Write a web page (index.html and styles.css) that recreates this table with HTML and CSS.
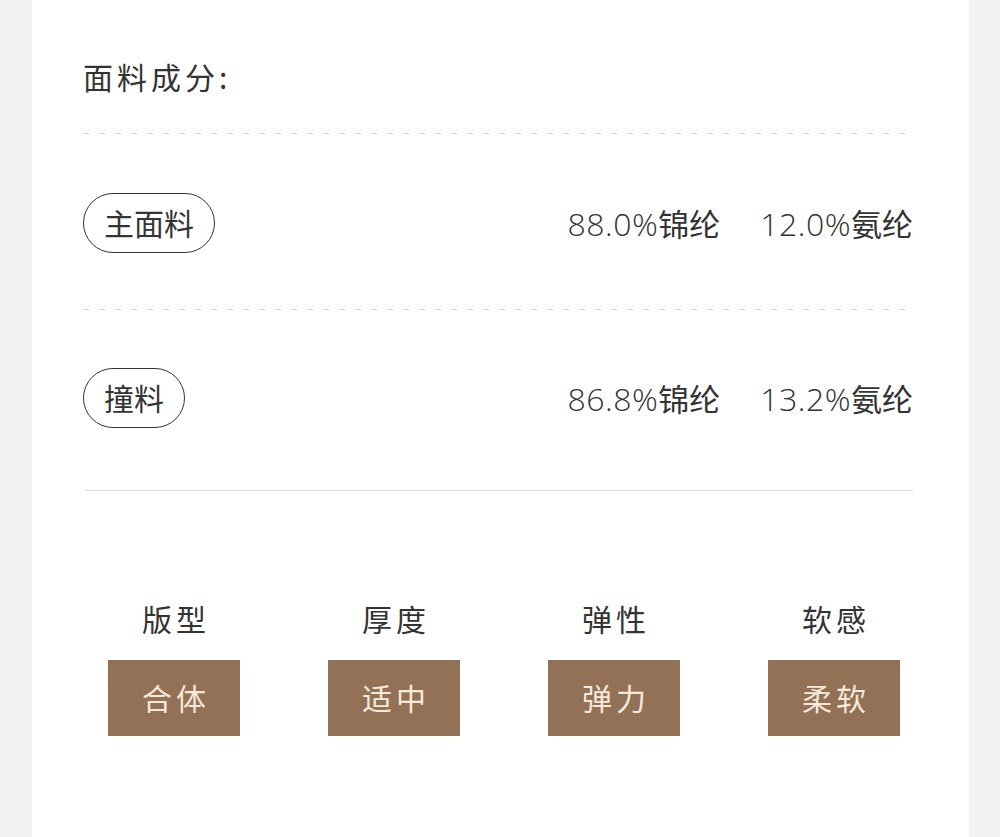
FILE: index.html
```html
<!DOCTYPE html>
<html lang="zh-CN">
<head>
<meta charset="utf-8">
<title>面料成分</title>
<link rel="stylesheet" href="styles.css">
</head>
<body>
<div class="card">
  <div class="title">面料成分:</div>
  <div class="dash"></div>
  <div class="row">
    <div class="pill">主面料</div>
    <div class="vals"><span><span class="num">88.0%</span>锦纶</span><span><span class="num">12.0%</span>氨纶</span></div>
  </div>
  <div class="dash"></div>
  <div class="row row2">
    <div class="pill">撞料</div>
    <div class="vals"><span><span class="num">86.8%</span>锦纶</span><span><span class="num">13.2%</span>氨纶</span></div>
  </div>
  <div class="rule"></div>
  <div class="attrs">
    <div class="attr"><div class="label">版型</div><div class="tag">合体</div></div>
    <div class="attr"><div class="label">厚度</div><div class="tag">适中</div></div>
    <div class="attr"><div class="label">弹性</div><div class="tag">弹力</div></div>
    <div class="attr"><div class="label">软感</div><div class="tag">柔软</div></div>
  </div>
</div>
</body>
</html>
```
FILE: styles.css
```css
html, body {
  margin: 0;
  padding: 0;
  background: #f2f2f2;
}
body {
  font-family: "Noto Sans CJK SC", "Noto Sans", sans-serif;
  color: #333;
}
.card {
  width: 937px;
  margin-left: 32px;
  min-height: 837px;
  background: #fff;
  box-sizing: border-box;
  padding: 56px 56px 0 51px;
}
.title {
  font-size: 30px;
  line-height: 40px;
  letter-spacing: 4px;
  margin-bottom: 37px;
}
.dash {
  height: 1px;
  background: repeating-linear-gradient(to right, #cfcfcf 0 6px, transparent 6px 16px);
}
.row {
  display: flex;
  align-items: center;
  justify-content: space-between;
  padding: 59px 0 56px;
}
.row2 {
  padding: 58px 0 62px;
}
.pill {
  height: 60px;
  box-sizing: border-box;
  border: 1px solid #333;
  border-radius: 30px;
  padding: 0 20px;
  font-size: 30px;
  line-height: 56px;
}
.vals {
  display: flex;
  gap: 40px;
  font-size: 31px;
  line-height: 40px;
}
.num {
  font-family: "Open Sans", "Noto Sans", sans-serif;
  font-weight: 350;
  font-size: 32px;
  letter-spacing: 0.5px;
}
.rule {
  height: 1px;
  margin-left: 2px;
  background: #dcdcdc;
}
.attrs {
  display: flex;
  justify-content: space-between;
  padding: 107px 13px 0 25px;
}
.attr {
  display: flex;
  flex-direction: column;
  align-items: center;
  gap: 22px;
}
.label {
  font-size: 30px;
  line-height: 40px;
  letter-spacing: 4px;
  margin-right: -4px;
}
.tag {
  width: 132px;
  height: 76px;
  background: #937157;
  color: #f5e9da;
  font-size: 30px;
  line-height: 74px;
  letter-spacing: 4px;
  text-indent: 4px;
  text-align: center;
}
```
